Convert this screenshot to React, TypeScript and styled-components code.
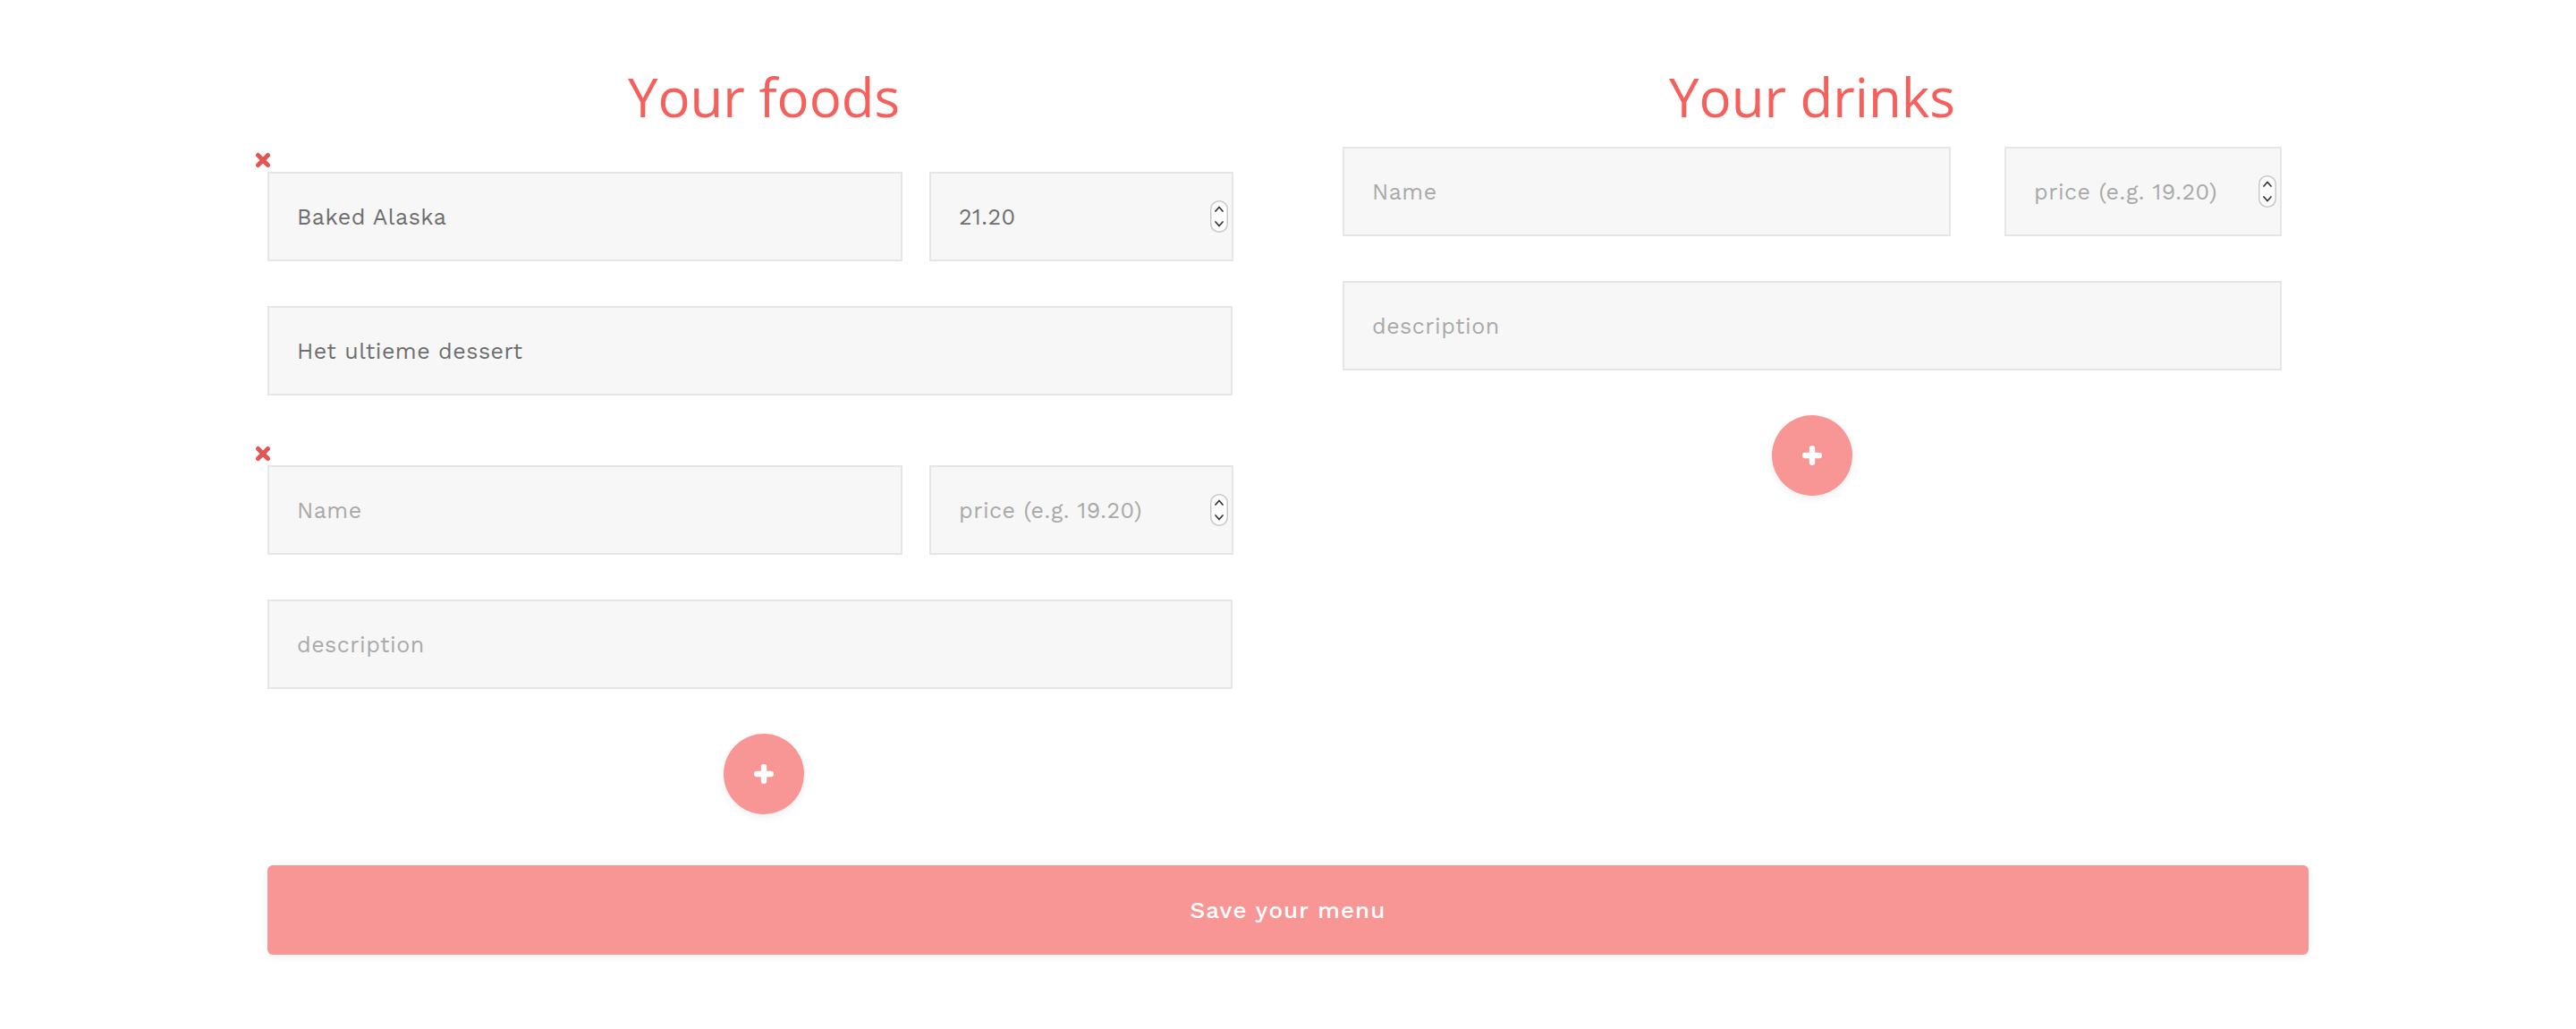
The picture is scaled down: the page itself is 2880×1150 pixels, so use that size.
import React from "react";
import styled, { createGlobalStyle } from "styled-components";

const GlobalStyle = createGlobalStyle`
  html, body { margin: 0; padding: 0; background: #ffffff; }
  body { font-family: "Work Sans", "Open Sans", "Liberation Sans", sans-serif; }
  *, *::before, *::after { box-sizing: border-box; }
`;

const Page = styled.main`
  width: 2282px;
  margin: 0 auto;
  padding: 68px 0 80px;
`;

const Columns = styled.div`
  display: grid;
  grid-template-columns: 1110px 1110px;
  column-gap: 62px;
  align-items: start;
`;

const Column = styled.section`
  display: flex;
  flex-direction: column;
`;

const Title = styled.h2`
  margin: 0 0 16px;
  font-family: "Open Sans", "Liberation Sans", sans-serif;
  font-weight: 400;
  font-size: 60px;
  line-height: 80px;
  color: #f6605c;
  text-align: center;
`;

const Items = styled.div<{ $pad: string }>`
  display: flex;
  flex-direction: column;
  gap: 50px;
  padding: ${(p) => p.$pad};
`;

const Group = styled.div<{ $removable?: boolean }>`
  position: relative;
  display: flex;
  flex-direction: column;
  gap: 50px;
  padding-top: ${(p) => (p.$removable ? "28px" : "0")};
`;

const Row = styled.div<{ $cols: string; $gap: number }>`
  display: grid;
  grid-template-columns: ${(p) => p.$cols};
  column-gap: ${(p) => p.$gap}px;
`;

const Field = styled.div`
  position: relative;
`;

const Input = styled.input`
  display: block;
  width: 100%;
  height: 100px;
  margin: 0;
  padding: 0 31px;
  border: 2px solid #e6e6e6;
  border-radius: 0;
  background: #f7f7f7;
  font-family: "Work Sans", "Open Sans", "Liberation Sans", sans-serif;
  font-size: 25px;
  letter-spacing: 0.5px;
  color: #6e6e6e;
  outline: none;
  &::placeholder {
    color: #a9a9a9;
    opacity: 1;
  }
`;

const Spinner = styled.span`
  position: absolute;
  right: 6px;
  top: 50%;
  transform: translateY(-50%);
  width: 20px;
  height: 36px;
  display: flex;
  pointer-events: none;
`;

const RemoveButton = styled.button`
  position: absolute;
  top: 6px;
  left: -14px;
  width: 18px;
  height: 18px;
  padding: 0;
  border: 0;
  background: none;
  display: flex;
  cursor: pointer;
`;

const AddButton = styled.button`
  align-self: center;
  margin-top: 50px;
  width: 90px;
  height: 90px;
  padding: 0;
  border: 0;
  border-radius: 50%;
  background: #f89695;
  box-shadow: 0 3px 10px rgba(0, 0, 0, 0.07);
  display: flex;
  align-items: center;
  justify-content: center;
  cursor: pointer;
`;

const SaveButton = styled.button`
  display: block;
  width: 100%;
  height: 100px;
  margin-top: 57px;
  border: 0;
  border-radius: 6px;
  background: #f89695;
  box-shadow: 0 3px 10px rgba(0, 0, 0, 0.06);
  color: #ffffff;
  font-family: "Work Sans", "Open Sans", "Liberation Sans", sans-serif;
  font-size: 26px;
  font-weight: 500;
  letter-spacing: 1.1px;
  cursor: pointer;
`;

const SpinnerIcon = () => (
  <svg width="20" height="36" viewBox="0 0 20 36">
    <rect x="0.75" y="0.75" width="18.5" height="34.5" rx="9" fill="#ffffff" stroke="#c9c9c9" strokeWidth="1.5" />
    <path d="M6 12 L10 7.5 L14 12" fill="none" stroke="#333333" strokeWidth="1.7" strokeLinecap="round" strokeLinejoin="round" />
    <path d="M6 24 L10 28.5 L14 24" fill="none" stroke="#333333" strokeWidth="1.7" strokeLinecap="round" strokeLinejoin="round" />
  </svg>
);

const CrossIcon = () => (
  <svg width="18" height="18" viewBox="0 0 18 18">
    <path d="M3.5 3.5 L14.5 14.5 M14.5 3.5 L3.5 14.5" stroke="#e25656" strokeWidth="5" strokeLinecap="round" />
  </svg>
);

const PlusIcon = () => (
  <svg width="22" height="22" viewBox="0 0 22 22">
    <path d="M11 3.2 V18.8 M3.2 11 H18.8" stroke="#ffffff" strokeWidth="6.4" strokeLinecap="round" />
  </svg>
);

type Item = { name: string; price: string; description: string };

const ItemFields = ({
  item,
  cols,
  gap,
  removable,
}: {
  item: Item;
  cols: string;
  gap: number;
  removable?: boolean;
}) => (
  <Group $removable={removable}>
    {removable && (
      <RemoveButton aria-label="remove">
        <CrossIcon />
      </RemoveButton>
    )}
    <Row $cols={cols} $gap={gap}>
      <Field>
        <Input placeholder="Name" defaultValue={item.name} />
      </Field>
      <Field>
        <Input placeholder="price (e.g. 19.20)" defaultValue={item.price} />
        <Spinner>
          <SpinnerIcon />
        </Spinner>
      </Field>
    </Row>
    <Field>
      <Input placeholder="description" defaultValue={item.description} />
    </Field>
  </Group>
);

const foods: Item[] = [
  { name: "Baked Alaska", price: "21.20", description: "Het ultieme dessert" },
  { name: "", price: "", description: "" },
];

const drinks: Item[] = [{ name: "", price: "", description: "" }];

export default function App() {
  return (
    <>
      <GlobalStyle />
      <Page>
        <Columns>
          <Column>
            <Title>Your foods</Title>
            <Items $pad="0 31px 0 0">
              {foods.map((f, i) => (
                <ItemFields key={i} item={f} cols="710px 340px" gap={30} removable />
              ))}
            </Items>
            <AddButton aria-label="add food">
              <PlusIcon />
            </AddButton>
          </Column>
          <Column>
            <Title>Your drinks</Title>
            <Items $pad="0 30px 0 30px">
              {drinks.map((d, i) => (
                <ItemFields key={i} item={d} cols="680px 310px" gap={60} />
              ))}
            </Items>
            <AddButton aria-label="add drink">
              <PlusIcon />
            </AddButton>
          </Column>
        </Columns>
        <SaveButton>Save your menu</SaveButton>
      </Page>
    </>
  );
}
